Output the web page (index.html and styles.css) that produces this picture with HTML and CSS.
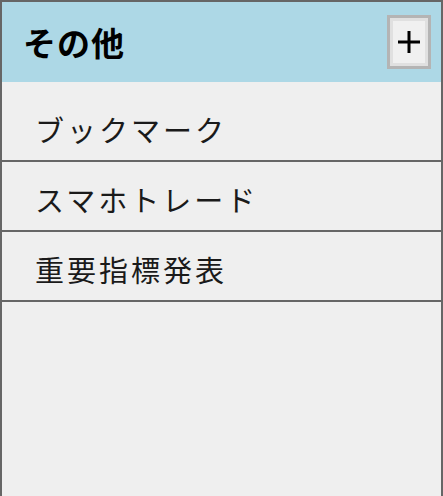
FILE: index.html
```html
<!DOCTYPE html>
<html lang="ja">
<head>
<meta charset="utf-8">
<link rel="stylesheet" href="styles.css">
</head>
<body>
<div class="panel">
  <div class="header">
    <h1 class="title">その他</h1>
    <button class="add-btn" type="button" aria-label="追加">
      <svg width="22" height="22" viewBox="0 0 22 22"><path d="M0 11H22M11 0V22" stroke="#000" stroke-width="3" fill="none"/></svg>
    </button>
  </div>
  <ul class="list">
    <li class="item">ブックマーク</li>
    <li class="item">スマホトレード</li>
    <li class="item">重要指標発表</li>
  </ul>
</div>
</body>
</html>
```

FILE: styles.css
```css
html, body {
  margin: 0;
  padding: 0;
  height: 100%;
  background: #efefef;
}
.panel {
  box-sizing: border-box;
  width: 443px;
  min-height: 100vh;
  border: 2px solid #666;
  border-bottom: none;
  background: #efefef;
  font-family: "Noto Sans CJK JP", "Noto Sans", sans-serif;
  color: #111;
}
.header {
  height: 80px;
  background: #add8e6;
  display: flex;
  align-items: center;
  justify-content: space-between;
  padding: 0 10px 0 21px;
}
.title {
  margin: 0;
  font-size: 33px;
  font-weight: 700;
  line-height: 1;
  color: #000;
  letter-spacing: 1px;
}
.add-btn {
  box-sizing: border-box;
  width: 44px;
  height: 54px;
  border: 3px solid #b4b4b4;
  background: #f0f0f0;
  box-shadow: inset 0 0 0 3px #e0e0e0;
  padding: 0;
  display: flex;
  align-items: center;
  justify-content: center;
}
.add-btn svg {
  display: block;
}
.list {
  list-style: none;
  margin: 0;
  padding: 10px 0 0 0;
}
.item {
  border-bottom: 2px solid #666;
  display: flex;
  align-items: center;
  padding: 6px 0 0 33px;
  box-sizing: content-box;
  height: 62px;
  font-size: 29px;
  font-weight: 400;
  letter-spacing: 3px;
  line-height: 1;
  color: #1a1a1a;
}
```
